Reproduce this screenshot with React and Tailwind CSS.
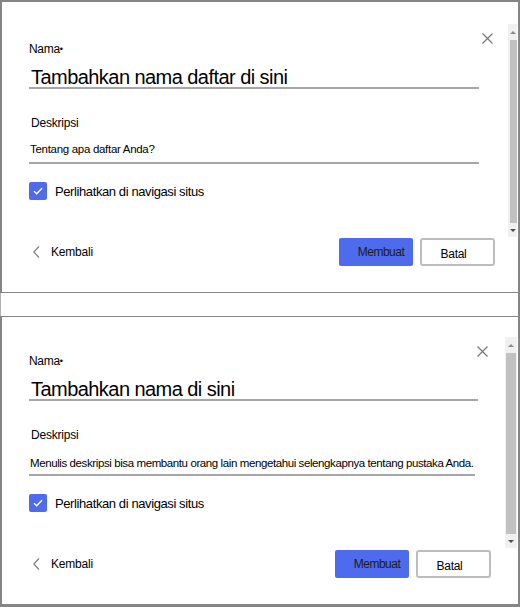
import React from "react";

function CloseX() {
  return (
    <svg width="11" height="11" viewBox="0 0 11 11">
      <path d="M0.5 0.5L10.5 10.5M10.5 0.5L0.5 10.5" stroke="#767676" strokeWidth="1.2" fill="none" />
    </svg>
  );
}

function Chevron() {
  return (
    <svg width="7" height="12" viewBox="0 0 7 12">
      <path d="M6 0.5L0.8 6L6 11.5" stroke="#7a7a7a" strokeWidth="1.1" fill="none" />
    </svg>
  );
}

function Check() {
  return (
    <svg width="10" height="8" viewBox="0 0 10 8">
      <path d="M1 4.2L3.7 6.8L9 1.2" stroke="#ffffff" strokeWidth="1.4" fill="none" />
    </svg>
  );
}

function Scrollbar({ wide }) {
  return (
    <div className={wide ? "w-[12px] mt-[20px] h-[211px] bg-[#f0f0f0] flex flex-col" : "w-[9px] mt-[22px] h-[213px] bg-[#f0f0f0] flex flex-col"}>
      <div className="h-[16px] flex items-center justify-center">
        <div className="w-0 h-0 border-l-[3px] border-r-[3px] border-b-[3px] border-l-transparent border-r-transparent border-b-[#8a8a8a]"></div>
      </div>
      <div className={wide ? "flex-1 ml-[1px] w-[10px] bg-[#c1c1c1]" : "flex-1 ml-[2px] w-[7px] bg-[#c1c1c1]"}></div>
      <div className="h-[14px] flex items-center justify-center">
        <div className="w-0 h-0 border-l-[3px] border-r-[3px] border-t-[3px] border-l-transparent border-r-transparent border-t-[#505050]"></div>
      </div>
    </div>
  );
}

function Panel({ bottom, title, desc }) {
  return (
    <div
      className={
        bottom
          ? "h-[291px] border-t border-b-[3px] border-l-2 border-r-2 border-[#858585] flex"
          : "h-[293px] border-t-2 border-b border-l-2 border-r-2 border-[#858585] flex"
      }
    >
      <div className={bottom ? "relative flex-1 flex flex-col pl-[27px] pr-[14px] pt-[36px]" : "relative flex-1 flex flex-col pl-[27px] pr-[13px] pt-[39px]"}>
        <div className={bottom ? "absolute top-[29px] right-[17px]" : "absolute top-[31px] right-[15px]"}>
          <CloseX />
        </div>
        <div className={bottom ? "mr-[13px] flex flex-col" : "mr-[16px] flex flex-col"}>
          <div className="text-[12px] leading-[16px] text-black tracking-[-0.3px]">
            Nama<span className="text-[9px] align-[1px]">•</span>
          </div>
          <div className="mt-[10px] text-[20px] leading-[20px] text-black tracking-[-0.55px] border-b-2 border-[#a6a6a6] pl-[2px]">
            {title}
          </div>
          <div className="mt-[26px] text-[12px] leading-[16px] text-black tracking-[-0.2px] pl-[2px]">
            Deskripsi
          </div>
          <div
            className={
              bottom
                ? "mt-[12px] pb-[3px] mr-[3px] text-[11.5px] leading-[16px] text-black tracking-[-0.4px] whitespace-nowrap border-b-2 border-[#a6a6a6] pl-[1px]"
                : "mt-[10px] pb-[5px] text-[11.5px] leading-[16px] text-black tracking-[-0.3px] whitespace-nowrap border-b-2 border-[#a6a6a6] pl-[1px]"
            }
          >
            {desc}
          </div>
          <div className="mt-[18px] flex items-center">
            <div className="w-[18px] h-[18px] rounded-[2px] bg-[#4f6bed] flex items-center justify-center">
              <Check />
            </div>
            <div className="ml-[8px] text-[13px] leading-[16px] text-black tracking-[-0.4px] pt-[2px]">
              Perlihatkan di navigasi situs
            </div>
          </div>
        </div>
        <div className="mt-[38px] flex items-center">
          <div className="pl-[4px] flex items-center">
            <Chevron />
            <span className="ml-[11px] text-[12px] leading-[16px] text-black tracking-[-0.2px]">Kembali</span>
          </div>
          <div className="flex-1"></div>
          <div className="w-[74px] h-[28px] rounded-[2px] bg-[#4f6bed] flex items-center justify-center pl-[10px] text-[12px] text-[#1b1b1b] tracking-[-0.5px]">
            Membuat
          </div>
          <div className="ml-[7px] w-[75px] h-[28px] rounded-[3px] border-2 border-[#bdbdbd] bg-white flex items-center justify-center pr-[8px] pt-[4px] text-[12px] text-black tracking-[-0.3px]">
            Batal
          </div>
        </div>
      </div>
      <Scrollbar wide={bottom} />
      <div className="w-[1px]"></div>
    </div>
  );
}

export default function App() {
  return (
    <div className="w-[520px] h-[607px] bg-white font-['Liberation_Sans',Arial,sans-serif] flex flex-col">
      <Panel title="Tambahkan nama daftar di sini" desc="Tentang apa daftar Anda?" />
      <div className="h-[23px] border-l border-r-2 border-l-[#b0b0b0] border-r-[#858585]"></div>
      <Panel
        bottom
        title="Tambahkan nama di sini"
        desc="Menulis deskripsi bisa membantu orang lain mengetahui selengkapnya tentang pustaka Anda."
      />
    </div>
  );
}
